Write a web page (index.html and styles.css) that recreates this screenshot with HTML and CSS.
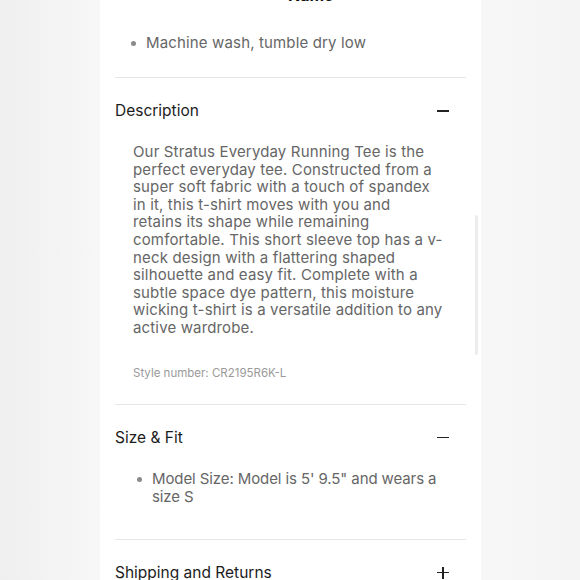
FILE: index.html
```html
<!DOCTYPE html>
<html lang="en">
<head>
<meta charset="utf-8">
<title>Product details</title>
<link rel="stylesheet" href="styles.css">
</head>
<body>
<div class="panel">
  <div class="top-title">Name</div>
  <ul class="bullets care">
    <li>Machine wash, tumble dry low</li>
  </ul>

  <section class="acc">
    <div class="acc-head">
      <span class="acc-title">Description</span>
      <span class="icon minus"></span>
    </div>
    <div class="acc-body desc">
      <p class="desc-text">Our Stratus Everyday Running Tee is the<br>perfect everyday tee. Constructed from a<br>super soft fabric with a touch of spandex<br>in it, this t-shirt moves with you and<br>retains its shape while remaining<br>comfortable. This short sleeve top has a v-<br>neck design with a flattering shaped<br>silhouette and easy fit. Complete with a<br>subtle space dye pattern, this moisture<br>wicking t-shirt is a versatile addition to any<br>active wardrobe.</p>
      <p class="style-no">Style number: CR2195R6K-L</p>
    </div>
  </section>

  <section class="acc">
    <div class="acc-head">
      <span class="acc-title">Size &amp; Fit</span>
      <span class="icon minus"></span>
    </div>
    <div class="acc-body fit">
      <ul class="bullets">
        <li>Model Size: Model is 5' 9.5" and wears a size S</li>
      </ul>
    </div>
  </section>

  <section class="acc">
    <div class="acc-head">
      <span class="acc-title">Shipping and Returns</span>
      <span class="icon plus"></span>
    </div>
  </section>
  <div class="scrollbar"></div>
</div>
</body>
</html>
```
FILE: styles.css
```css
html, body {
  margin: 0;
  padding: 0;
}
body {
  height: 580px;
  overflow: hidden;
  background: linear-gradient(90deg, #efefef 0px, #f7f7f7 100px, #f7f7f7 481px, #f4f4f4 580px);
  font-family: "Inter", "Noto Sans", "Liberation Sans", sans-serif;
}
.panel {
  position: relative;
  display: flow-root;
  width: 381px;
  margin-left: 100px;
  min-height: 600px;
  background: #fff;
  padding: 0 15px;
  box-sizing: border-box;
}
.top-title {
  margin-top: -13px;
  height: 16px;
  padding-left: 173px;
  font-size: 16px;
  line-height: 16px;
  font-weight: 700;
  color: #111;
}
.bullets {
  margin: 0;
  padding: 0 0 0 17px;
  list-style: none;
  color: #666;
  font-size: 15px;
  line-height: 18px;
}
.bullets li {
  position: relative;
  padding-left: 14px;
}
.bullets li::before {
  content: "";
  position: absolute;
  left: -1px;
  top: 7px;
  width: 5px;
  height: 5px;
  border-radius: 50%;
  background: #8a8a8a;
}
.care {
  padding-top: 31px;
  padding-bottom: 25px;
  letter-spacing: 0.15px;
  border-bottom: 1.5px solid #e6e6e6;
}
.acc {
  border-bottom: 1.5px solid #e6e6e6;
}
.acc:last-of-type {
  border-bottom: none;
}
.acc-head {
  display: flex;
  align-items: center;
  justify-content: space-between;
  padding: 24px 17px 23px 0;
  font-size: 15.5px;
  line-height: 18px;
  color: #1c1c1c;
}
.icon {
  position: relative;
  width: 12px;
  height: 12px;
}
.icon::before,
.icon::after {
  content: "";
  position: absolute;
  background: #222;
}
.icon::before {
  left: 0;
  top: 5px;
  width: 12px;
  height: 1.5px;
}
.plus::after {
  left: 5.25px;
  top: 0;
  width: 1.5px;
  height: 12px;
}
.desc {
  padding: 0 0 23px 18px;
}
.desc-text {
  margin: 0;
  width: 345px;
  font-size: 15px;
  line-height: 17.6px;
  letter-spacing: 0.15px;
  color: #666;
}
.style-no {
  margin: 28px 0 0;
  font-size: 11.5px;
  line-height: 16px;
  color: #9a9a9a;
}
.fit {
  padding-bottom: 33px;
}
.fit .bullets {
  padding-left: 23px;
  letter-spacing: -0.1px;
}
.scrollbar {
  position: absolute;
  left: 375px;
  top: 215px;
  width: 3px;
  height: 140px;
  background: #ededed;
  border-radius: 2px;
}
```
